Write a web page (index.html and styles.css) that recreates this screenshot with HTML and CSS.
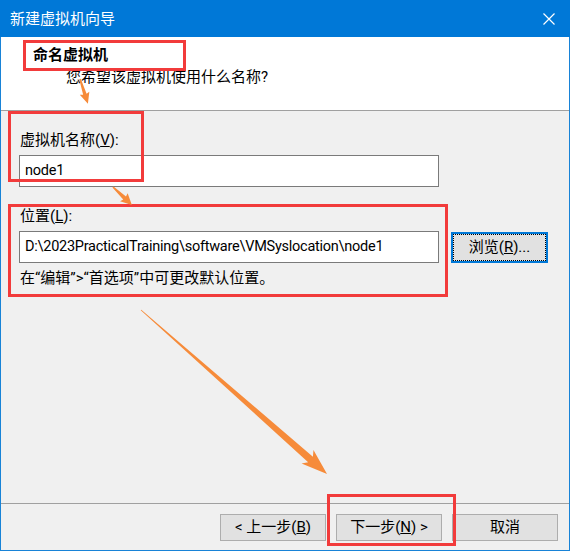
FILE: index.html
```html
<!DOCTYPE html>
<html lang="zh-CN">
<head>
<meta charset="utf-8">
<title>新建虚拟机向导</title>
<link rel="stylesheet" href="styles.css">
</head>
<body>
<div class="window">
  <div class="titlebar">
    <span class="title">新建虚拟机向导</span>
    <svg class="close" width="12" height="12" viewBox="0 0 12 12">
      <path d="M0.5 0.5 L11.5 11.5 M11.5 0.5 L0.5 11.5" stroke="#fff" stroke-width="1.2" fill="none"/>
    </svg>
  </div>

  <div class="header">
    <div class="step-title">命名虚拟机</div>
    <div class="step-desc">您希望该虚拟机使用什么名称?</div>
  </div>

  <div class="content">
    <div class="field-label">虚拟机名称(<u>V</u>):</div>
    <div class="row">
      <div class="textbox">node1</div>
    </div>

    <div class="field-label second">位置(<u>L</u>):</div>
    <div class="row">
      <div class="textbox">D:\2023PracticalTraining\software\VMSyslocation\node1</div>
      <button class="btn browse">浏览(<u>R</u>)...</button>
    </div>
    <div class="hint">在“编辑”&gt;“首选项”中可更改默认位置。</div>
  </div>

  <div class="footer">
    <button class="btn">&lt; 上一步(<u>B</u>)</button>
    <button class="btn">下一步(<u>N</u>) &gt;</button>
    <button class="btn">取消</button>
  </div>

  <!-- callout marks drawn on top of the dialog -->
  <svg class="marks" width="570" height="551" viewBox="0 0 570 551">
    <g fill="none" stroke="#f23b3b" stroke-width="3">
      <rect x="24.5" y="41.5" width="160" height="28"/>
      <rect x="9.5" y="112.5" width="133" height="68"/>
      <rect x="9.5" y="205.5" width="437" height="90"/>
      <rect x="328.5" y="495.5" width="126" height="49"/>
    </g>
    <g fill="#f68b3a">
      <polygon transform="translate(80 79) rotate(72.3)" points="0,-0.8 16,-1.8 15,-5 26,0 15,5 16,1.8 0,0.8"/>
      <polygon transform="translate(113 187) rotate(43.5)" points="0,-0.8 16,-2 15,-5.5 26,0 15,5.5 16,2 0,0.8"/>
      <polygon transform="translate(141 310) rotate(41.4)" points="0,-0.4 226,-3.6 222,-9 248,0 222,9 226,3.6 0,0.4"/>
    </g>
  </svg>
</div>
</body>
</html>
```

FILE: styles.css
```css
* {
  box-sizing: border-box;
}

html, body {
  margin: 0;
  padding: 0;
}

body {
  width: 570px;
  height: 551px;
  font-family: Roboto, "Noto Sans CJK SC", sans-serif;
  font-size: 15px;
  color: #000;
  overflow: hidden;
}

.window {
  position: relative;
  width: 570px;
  height: 551px;
  display: flex;
  flex-direction: column;
  background: #f0f0f0;
  border: 1px solid #1883d7;
  border-top: 0;
}

.titlebar {
  height: 37px;
  flex: none;
  margin: 0 -1px;
  padding: 0 15px 0 10px;
  background: #0078d7;
  color: #fff;
  display: flex;
  align-items: center;
  justify-content: space-between;
}

.title {
  line-height: 20px;
}

.close {
  display: block;
}

.header {
  height: 74px;
  flex: none;
  background: #fff;
  border-bottom: 1px solid #a0a0a0;
  padding: 8px 0 0 32px;
}

.step-title {
  font-weight: 700;
  line-height: 20px;
}

.step-desc {
  line-height: 20px;
  margin: 2px 0 0 33px;
}

.content {
  flex: 1;
  padding: 19px 0 0 18px;
}

.field-label {
  line-height: 20px;
  padding-left: 1px;
}

.field-label.second {
  margin-top: 19px;
}

.row {
  display: flex;
  align-items: center;
  gap: 12px;
  margin-top: 5px;
}

.textbox {
  width: 420px;
  height: 32px;
  background: #fff;
  border: 1px solid #7a7a7a;
  padding: 0 5px;
  font-size: 14.5px;
  letter-spacing: -0.25px;
  line-height: 30px;
  white-space: nowrap;
}

.hint {
  line-height: 20px;
  margin-top: 5px;
  padding-left: 1px;
}

.btn {
  font: inherit;
  color: #000;
  background: #e1e1e1;
  border: 1px solid #adadad;
  width: 106px;
  height: 27px;
  padding: 0;
  line-height: 25px;
  text-align: center;
  white-space: nowrap;
}

.btn.browse {
  width: 97px;
  height: 31px;
  margin-top: 1px;
  border: 2px solid #0078d7;
  line-height: 27px;
  outline: 1px dotted #000;
  outline-offset: -3px;
}

.footer {
  height: 47px;
  flex: none;
  border-top: 1px solid #a0a0a0;
  display: flex;
  justify-content: flex-end;
  align-items: flex-start;
  gap: 10px;
  padding: 10px 11px 0 0;
}

.marks {
  position: absolute;
  left: -1px;
  top: 0;
  pointer-events: none;
}
```
